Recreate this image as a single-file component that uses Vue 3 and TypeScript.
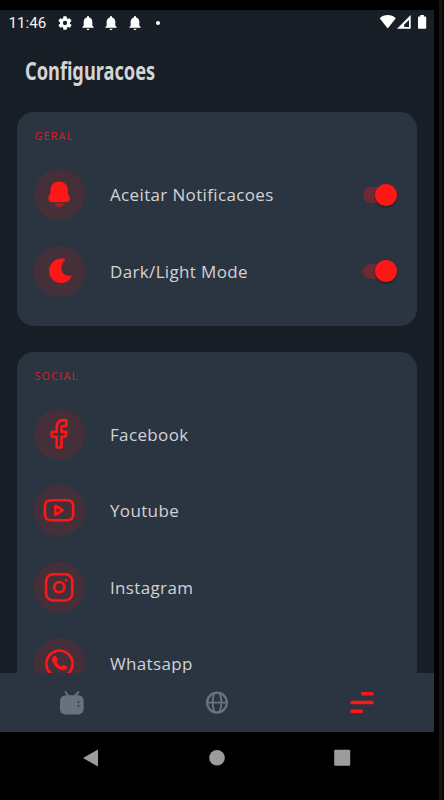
<script setup lang="ts">
import { ref } from 'vue'

type IconName = 'bell' | 'moon' | 'facebook' | 'youtube' | 'instagram' | 'whatsapp'

interface Row {
  icon: IconName
  label: string
  toggle?: boolean
}

interface Section {
  title: string
  rows: Row[]
}

const sections = ref<Section[]>([
  {
    title: 'GERAL',
    rows: [
      { icon: 'bell', label: 'Aceitar Notificacoes', toggle: true },
      { icon: 'moon', label: 'Dark/Light Mode', toggle: true },
    ],
  },
  {
    title: 'SOCIAL',
    rows: [
      { icon: 'facebook', label: 'Facebook' },
      { icon: 'youtube', label: 'Youtube' },
      { icon: 'instagram', label: 'Instagram' },
      { icon: 'whatsapp', label: 'Whatsapp' },
    ],
  },
])
</script>

<template>
  <div class="device">
    <div class="screen">
      <header class="status">
        <span class="clock">11:46</span>
        <svg class="gear" width="16" height="16" viewBox="0 0 24 24">
          <path fill="#fff" fill-rule="evenodd" d="M19.4 13c.1-.3.1-.6.1-1s0-.7-.1-1l2.100-1.650a.5.5 0 0 0 .12-.64l-2-3.460a.5.5 0 0 0-.61-.22l-2.490 1a7.300 7.300 0 0 0-1.690-.98l-.38-2.650A.49.49 0 0 0 14 2h-4a.49.49 0 0 0-.49.42l-.38 2.650c-.61.25-1.170.59-1.690.98l-2.490-1a.5.5 0 0 0-.61.22l-2 3.460a.5.5 0 0 0 .12.64L4.600 11a8 8 0 0 0 0 2l-2.100 1.650a.5.5 0 0 0-.12.64l2 3.460c.12.22.39.3.61.22l2.490-1c.52.4 1.080.73 1.690.98l.38 2.650c.03.24.24.4.49.4h4c.25 0 .46-.16.49-.4l.38-2.650c.61-.25 1.170-.59 1.690-.98l2.490 1c.22.08.49 0 .61-.22l2-3.460a.5.5 0 0 0-.12-.64zM12 15.200a3.200 3.200 0 1 1 0-6.400 3.200 3.200 0 0 1 0 6.400z" />
        </svg>
        <svg v-for="n in 3" :key="n" class="alert" width="16" height="16" viewBox="0 0 24 24">
          <path fill="#fff" d="M12 22.500c1.200 0 2.100-.9 2.100-2H9.900c0 1.100.9 2 2.100 2zm6.500-6.500v-5.500c0-3.200-1.700-5.900-4.900-6.600V3.100a1.600 1.600 0 0 0-3.200 0v.8C7.200 4.600 5.500 7.300 5.500 10.500V16l-2 2v1.200h17V18z" />
        </svg>
        <i class="dot"></i>
        <svg class="signals" width="48" height="16" viewBox="0 0 48 16">
          <path fill="#fff" d="M0.700 4.200C5-.2 12.500-.2 16.800 4.200L8.700 14.500z" />
          <path fill="#fff" fill-rule="evenodd" d="M31.700 1V14.700H18zM30 6v7h-4.800V10.500z" />
          <path fill="#fff" d="M41.300 1h3.600v1.500h1.500q.8 0 .8.8v10.600q0 .8-.8.8h-6.600q-.8 0-.8-.8V3.300q0-.8.8-.8h1.500z" />
        </svg>
      </header>

      <h1 class="title"><span>Configuracoes</span></h1>

      <main class="content">
        <section v-for="section in sections" :key="section.title" class="card">
          <h2 class="caption">{{ section.title }}</h2>
          <div v-for="row in section.rows" :key="row.label" class="row">
            <div class="badge">
              <svg width="51" height="51" viewBox="0 0 51 51">
                <g v-if="row.icon === 'bell'" fill="#ff1717">
                  <path d="M25.200 12.500c4.800 0 8.600 3.500 8.700 8.200v3.500c.1 1.600 2.100 2.800 2.100 5.100 0 2.600-1.900 3.900-4.600 3.900H18.900c-2.700 0-4.700-1.300-4.700-3.900 0-2.300 2.100-3.500 2.200-5.100v-3.500c.1-4.700 4-8.200 8.800-8.200z" />
                  <path opacity=".5" d="M21.800 34.500h7c1 0 1.200.7.6 1.400-2.200 2.800-6.200 2.800-8.300 0-.6-.7-.3-1.400.7-1.400z" />
                </g>
                <path v-else-if="row.icon === 'moon'" fill="#ff1717" d="M31.100 13.900c.6-.4.300-.9-.4-1.100C22.500 10.900 15.100 17 15.100 24.800c0 7 5.400 12.300 12.100 12.300 4.900 0 8.700-2.800 10.300-6.600.3-.8-.1-1.200-.8-1-5.100 1.200-9.300-2.200-9.300-7.600 0-3.400 1.300-6.200 3.700-8z" />
                <path v-else-if="row.icon === 'facebook'" class="line" d="M32.400 11.800v4.500q0 .7-.7.700h-2.200q-2 0-2 2v3.700h4.300q.8 0 .6.8l-.8 3.600q-.1.700-.9.700h-3.200v9.900q0 .8-.8.8h-3.200q-.8 0-.8-.8v-9.900H18.600q-.8 0-.8-.8v-3.500q0-.8.8-.8h4.100v-4.100q0-7.500 7.300-7.500h1.700q.7 0 .7.700z" />
                <g v-else-if="row.icon === 'youtube'" class="line">
                  <path d="M18.200 15.300h14c5.400 0 7 1.600 7 6.800v6.400c0 5.200-1.600 6.800-7 6.800h-14c-5.600 0-7.300-1.600-7.300-6.800v-6.400c0-5.200 1.700-6.800 7.300-6.800z" />
                  <path d="M21.300 21.400v7.600q0 .8.700.4l6.300-3.700q.7-.4 0-.8l-6.300-3.900q-.7-.4-.7.400z" />
                </g>
                <g v-else-if="row.icon === 'instagram'" class="line">
                  <rect x="12.100" y="12.200" width="26.200" height="26.300" rx="7" />
                  <circle cx="25.300" cy="25.200" r="5.100" />
                  <circle class="solid" cx="32" cy="18.300" r="1.350" />
                </g>
                <g v-else class="line">
                  <path d="M15.900 34.700a13.100 13.100 0 1 1 4.200 3l-7 1.300z" />
                  <path class="solid" d="M19.400 18.400c1.200-1.100 2.500-.8 3.200.6l1 2.200c.5 1.100-.8 1.900-1 2.700.8 2 2.600 3.700 4.700 4.600.9-.2 1.500-1.800 2.800-1.300l2.200 1.100c1.200.6 1.100 1.900 0 3-1.600 1.500-3.700 1.400-6.300.3-3.300-1.500-6-4.300-7.300-7.500-.9-2.400-.9-4.200.7-5.700z" />
                </g>
              </svg>
            </div>
            <span class="label">{{ row.label }}</span>
            <button v-if="row.toggle !== undefined" class="switch" :class="{ off: !row.toggle }" @click="row.toggle = !row.toggle">
              <i class="track"></i>
              <i class="knob"></i>
            </button>
          </div>
        </section>
      </main>

      <nav class="tabs">
        <a class="tab">
          <svg width="26" height="26" viewBox="0 0 26 26">
            <path d="M6.500 2l4 5M19.500 2L15 7" fill="none" stroke="#67727f" stroke-width="2" stroke-linecap="round" />
            <path fill="#67727f" d="M8 5.300h10c5 0 6.700 2 6.700 6.700v5.500c0 5-2 7-6.700 7H7.700c-4.700 0-6.700-2-6.700-7V12c0-4.700 2-6.700 7-6.700z" />
            <circle cx="19.500" cy="12" r="1" fill="#2b3541" />
            <circle cx="19.500" cy="16" r="1" fill="#2b3541" />
          </svg>
        </a>
        <a class="tab">
          <svg width="26" height="26" viewBox="0 0 26 26" fill="none" stroke="#67727f" stroke-width="2.300">
            <circle cx="13" cy="12.600" r="9.900" />
            <path d="M10.400 3.200q-3.600 9.400 0 18.800M15.600 3.200q3.600 9.400 0 18.800M3.200 12.600h19.600" stroke-width="1.900" />
          </svg>
        </a>
        <a class="tab">
          <svg width="26" height="26" viewBox="0 0 26 26" fill="none" stroke="#ff1717" stroke-width="3.600" stroke-linecap="round">
            <path d="M13.500 3.800H23M3 12.500H23M3 21.200H12.400" />
          </svg>
        </a>
      </nav>
    </div>

    <footer class="system">
      <svg width="17" height="18" viewBox="0 0 17 18"><path fill="#9c9c9c" d="M16 .5v17L1 9z" /></svg>
      <svg width="17" height="18" viewBox="0 0 17 18"><circle cx="9" cy="8.700" r="7.800" fill="#9c9c9c" /></svg>
      <svg width="17" height="18" viewBox="0 0 17 18"><rect x="0.200" y="0.800" width="16" height="16" rx="1" fill="#9c9c9c" /></svg>
    </footer>
  </div>
</template>

<style>
body {
  background: #000;
}
</style>

<style scoped>
.device {
  box-sizing: border-box;
  width: 444px;
  height: 800px;
  padding: 10px 10px 0 0;
  overflow: hidden;
  display: flex;
  flex-direction: column;
  background: linear-gradient(90deg, #000 439px, #141414 439px, #141414 442px, #060606 442px);
  font-family: 'Open Sans', sans-serif;
}
.screen {
  height: 722px;
  display: flex;
  flex-direction: column;
  background: #171e25;
}
.status {
  height: 26px;
  flex: none;
  display: flex;
  align-items: center;
  padding: 0 6.800px 0 8.500px;
}
.clock {
  width: 48px;
  color: #f2f2f2;
  font: 15.2px/26px Roboto, sans-serif;
}
.alert {
  margin-left: 7.400px;
}
.dot {
  width: 4px;
  height: 4px;
  margin: -1px 0 0 13.500px;
  border-radius: 50%;
  background: #fff;
}
.signals {
  margin: -2px 0 0 auto;
}
.title {
  flex: none;
  height: 76px;
  margin: 0;
  padding-left: 25px;
  color: #d3d4d6;
  font: 700 25.500px/68px 'Noto Sans', sans-serif;
}
.title span {
  display: inline-block;
  transform: scaleX(0.714);
  transform-origin: left;
}
.content {
  flex: 1;
  min-height: 0;
  overflow: hidden;
  padding: 0 17px;
}
.card {
  padding: 17px 17px 16.500px;
  margin-bottom: 25.500px;
  border-radius: 17px;
  background: #2b3541;
}
.caption {
  height: 27.500px;
  margin: 0;
  padding-left: 0.500px;
  color: #dc1c25;
  font: 400 10.800px/14px 'Open Sans', sans-serif;
  letter-spacing: 1.200px;
}
.row {
  height: 76.500px;
  display: flex;
  align-items: center;
}
.badge {
  width: 51px;
  height: 51px;
  border-radius: 50%;
  background: #452f39;
}
.badge svg {
  display: block;
}
.line {
  fill: none;
  stroke: #ff1717;
  stroke-width: 2.600;
  stroke-linecap: round;
  stroke-linejoin: round;
}
.solid {
  fill: #ff1717;
  stroke: none;
}
.label {
  margin-left: 25px;
  color: #d1d3d6;
  font-size: 17px;
  letter-spacing: 0.350px;
}
.switch {
  width: 34px;
  height: 22px;
  margin-left: auto;
  margin-right: 3px;
  padding: 0;
  border: 0;
  display: grid;
  align-items: center;
  background: none;
}
.track,
.knob {
  grid-area: 1 / 1;
}
.track {
  height: 15.500px;
  border-radius: 8px;
  background: #6c2a34;
}
.knob {
  width: 22px;
  height: 22px;
  justify-self: end;
  border-radius: 50%;
  background: #ff1717;
  box-shadow: 0 1px 2px rgba(0, 0, 0, 0.5);
}
.switch.off .knob {
  justify-self: start;
}
.tabs {
  flex: none;
  height: 59px;
  display: flex;
  background: #2b3541;
}
.tab {
  flex: 1;
  display: flex;
  align-items: center;
  justify-content: center;
}
.system {
  display: flex;
  justify-content: space-between;
  padding: 17px 83.500px 0 82px;
}
</style>
